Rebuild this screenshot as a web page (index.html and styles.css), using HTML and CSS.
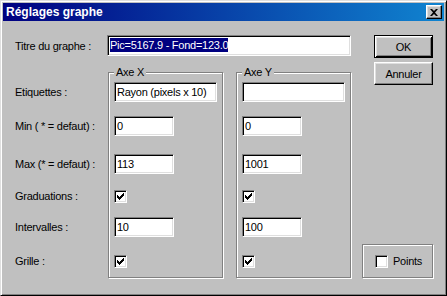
FILE: index.html
```html
<!DOCTYPE html>
<html lang="fr">
<head>
    <meta charset="UTF-8">
    <title>Réglages graphe</title>
    <link rel="stylesheet" href="styles.css">
</head>
<body>
    <div class="window">
        <div class="titlebar">
            <span class="title">Réglages graphe</span>
            <div class="close">
                <svg width="8" height="7" viewBox="0 0 8 7"><path d="M0 0h2l2 2 2-2h2L5 3.5 8 7H6L4 5 2 7H0l3-3.5z" fill="#000"/></svg>
            </div>
        </div>

        <div class="client">
            <div class="main">
                <div class="title-row">
                    <div class="label title-label">Titre du graphe :</div>
                    <div class="field wide"><span class="selected">Pic=5167.9 - Fond=123.0</span></div>
                </div>

                <div class="axes">
                    <div class="labels">
                        <div class="row etiq"><span class="label">Etiquettes :</span></div>
                        <div class="row min"><span class="label">Min ( * = defaut) :</span></div>
                        <div class="row max"><span class="label">Max (* = defaut) :</span></div>
                        <div class="row grad"><span class="label">Graduations :</span></div>
                        <div class="row interv"><span class="label">Intervalles :</span></div>
                        <div class="row grille"><span class="label">Grille :</span></div>
                    </div>

                    <div class="group axis">
                        <span class="group-title">Axe X</span>
                        <div class="row etiq"><div class="field long">Rayon (pixels x 10)</div></div>
                        <div class="row min"><div class="field short">0</div></div>
                        <div class="row max"><div class="field short">113</div></div>
                        <div class="row grad"><div class="check on"></div></div>
                        <div class="row interv"><div class="field short">10</div></div>
                        <div class="row grille"><div class="check on"></div></div>
                    </div>

                    <div class="group axis">
                        <span class="group-title">Axe Y</span>
                        <div class="row etiq"><div class="field long"></div></div>
                        <div class="row min"><div class="field short">0</div></div>
                        <div class="row max"><div class="field short">1001</div></div>
                        <div class="row grad"><div class="check on"></div></div>
                        <div class="row interv"><div class="field short">100</div></div>
                        <div class="row grille"><div class="check on"></div></div>
                    </div>
                </div>
            </div>

            <div class="side">
                <div class="btn default">OK</div>
                <div class="btn">Annuler</div>
                <div class="group points">
                    <div class="check"></div>
                    <span class="label">Points</span>
                </div>
            </div>
        </div>
    </div>
</body>
</html>
```

FILE: styles.css
```css
body {
    margin: 0;
    font-family: "Liberation Sans", Arial, sans-serif;
    font-size: 11px;
    letter-spacing: -0.25px;
    color: #000;
}

.window {
    width: 447px;
    height: 296px;
    box-sizing: border-box;
    background-color: #c0c0c0;
    border: 1px solid;
    border-color: #dfdfdf #000 #000 #dfdfdf;
    box-shadow: inset 1px 1px #fff, inset -1px -1px #808080;
    padding: 2px;
}

.titlebar {
    height: 18px;
    display: flex;
    align-items: center;
    justify-content: space-between;
    padding: 0 2px 0 3px;
    background: linear-gradient(to right, #000080, #1084d0);
}

.title {
    color: #fff;
    font-weight: bold;
    font-size: 12px;
    letter-spacing: 0;
}

.close {
    width: 16px;
    height: 14px;
    box-sizing: border-box;
    display: flex;
    align-items: center;
    justify-content: center;
    background-color: #c0c0c0;
    border: 1px solid;
    border-color: #fff #000 #000 #fff;
    box-shadow: inset -1px -1px #808080, inset 1px 1px #dfdfdf;
    padding-top: 1px;
}

.client {
    display: flex;
    padding: 14px 0 0 12px;
}

.title-row {
    display: flex;
    align-items: center;
    height: 21px;
}

.title-label {
    width: 92px;
}

.field {
    height: 20px;
    box-sizing: border-box;
    background-color: #fff;
    border: 1px solid;
    border-color: #808080 #fff #fff #808080;
    box-shadow: inset 1px 1px #000, inset -1px -1px #dfdfdf;
    padding: 0 2px;
    line-height: 18px;
    white-space: nowrap;
    overflow: hidden;
}

.field.wide {
    width: 244px;
    height: 21px;
    line-height: 19px;
    padding-left: 2px;
}

.field.long {
    width: 103px;
}

.field.short {
    width: 60px;
}

.selected {
    background-color: #000080;
    color: #fff;
    padding: 1px 0;
}

.axes {
    display: flex;
    margin-top: 16px;
}

.labels {
    width: 93px;
    padding-top: 10px;
}

.group {
    border: 1px solid #808080;
    box-shadow: 1px 1px 0 #fff, inset 1px 1px 0 #fff;
}

.axis {
    width: 115px;
    box-sizing: border-box;
    padding: 0 0 9px 5px;
}

.axis + .axis {
    margin-left: 13px;
}

.group-title {
    display: block;
    width: fit-content;
    line-height: 13px;
    margin: -7px 0 3px 0;
    padding: 0 2px;
    background-color: #c0c0c0;
}

.row {
    display: flex;
    align-items: flex-start;
}

.row .label {
    line-height: 20px;
}

.row.grad .label,
.row.grille .label {
    line-height: 13px;
}

.row.etiq { height: 34px; }
.row.min { height: 38px; }
.row.max { height: 36px; }
.row.grad { height: 27px; }
.row.interv { height: 38px; }
.row.grille { height: 13px; }

.check {
    width: 13px;
    height: 13px;
    box-sizing: border-box;
    background-color: #fff;
    border: 1px solid;
    border-color: #808080 #fff #fff #808080;
    box-shadow: inset 1px 1px #000, inset -1px -1px #dfdfdf;
}

.check.on {
    background-image: url("data:image/svg+xml,%3Csvg xmlns='http://www.w3.org/2000/svg' width='11' height='11'%3E%3Cpath d='M2 4h1v1h1v1h1V5h1V4h1V3h1V2h1v3H8v1H7v1H6v1H5v1H4V8H3V7H2z' fill='%23000'/%3E%3C/svg%3E");
    background-repeat: no-repeat;
}

.side {
    width: 72px;
    margin-left: 11px;
    display: flex;
    flex-direction: column;
    align-items: flex-end;
}

.btn {
    width: 59px;
    height: 23px;
    box-sizing: border-box;
    margin-right: 1px;
    display: flex;
    align-items: center;
    justify-content: center;
    border: 1px solid;
    border-color: #fff #000 #000 #fff;
    box-shadow: inset -1px -1px #808080, inset 1px 1px #dfdfdf;
}

.btn + .btn {
    margin-top: 4px;
}

.btn.default {
    border-color: #000;
    box-shadow: inset 1px 1px #fff, inset -1px -1px #000, inset 2px 2px #dfdfdf, inset -2px -2px #808080;
}

.points {
    margin-top: auto;
    width: 71px;
    height: 34px;
    box-sizing: border-box;
    margin-right: 1px;
    display: flex;
    align-items: center;
    padding-left: 12px;
    gap: 5px;
}
```
